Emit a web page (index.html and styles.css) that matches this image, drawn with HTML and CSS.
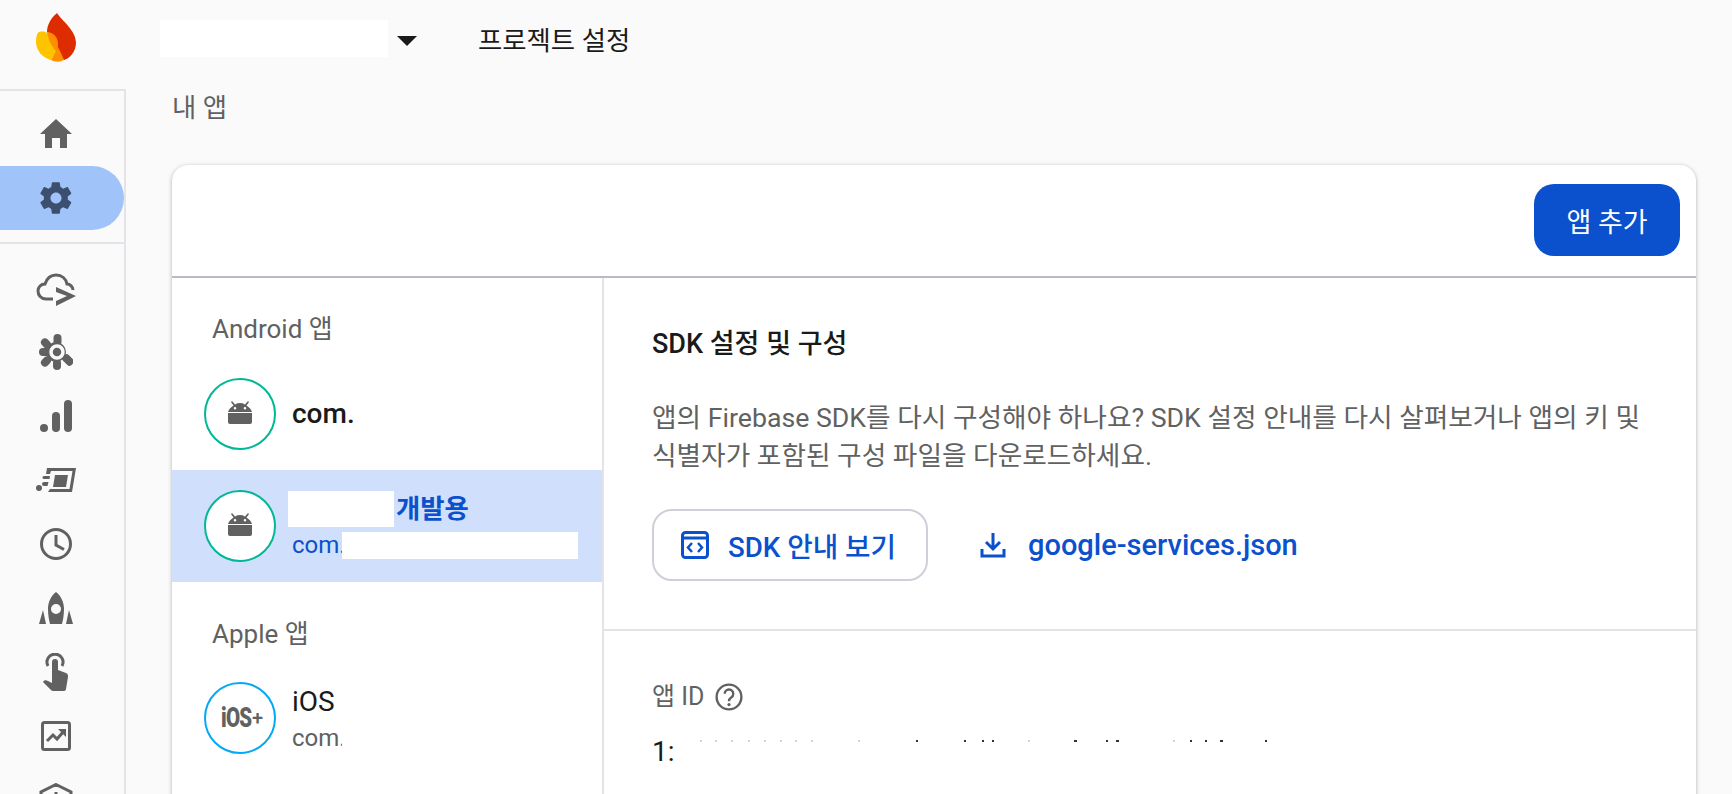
FILE: index.html
```html
<!DOCTYPE html>
<html lang="ko">

<head>
    <meta charset="UTF-8">
    <title>프로젝트 설정</title>
    <link rel="stylesheet" href="styles.css">
</head>

<body>
    <div class="page">
        <div class="logo">
            <svg width="41" height="50" viewBox="0 0 41 50">
                <path d="M15 47 C17 44 19 38 20 30 L29 46 C24 50 19 49 15 47Z" fill="#ff8f00"/>
                <path d="M21 0 C26 8 40 17 40 30 C40 39 33 46 28 47 C25 40 22 32 11 19 C11 12 15 5 21 0Z" fill="#dd2c00"/>
                <path d="M3 19 C7 18 10 19 11 20 C14 28 17 33 20 38 L15 47 C7 45 0 38 0 29 C0 24 1 20 3 19Z" fill="#ffc400"/>
                <path d="M11 19 C17 19 22 24 22 31 C22 34 21 36 19.5 38 C16 33 12 27 11 19Z" fill="#ff8f00"/>
            </svg>
        </div>
        <aside class="sidebar">
            <div class="nav-item">
                <svg width="34" height="30" viewBox="0 0 34 30"><path d="M17 0 L33 15 H28 V29 H21 V19 H13 V29 H6 V15 H1Z" fill="#616161"/></svg>
            </div>
            <div class="nav-item active">
                <svg width="38" height="38" viewBox="0 0 24 24"><path d="M19.4 13c.1-.3.1-.6.1-1s0-.7-.1-1l2.100-1.600c.2-.2.2-.4.1-.6l-2-3.500c-.1-.2-.4-.3-.6-.2l-2.500 1c-.5-.4-1.100-.7-1.700-1L14.400 2.400c0-.2-.2-.4-.5-.4h-4c-.3 0-.5.2-.5.4L9 5.100c-.6.3-1.200.6-1.700 1l-2.500-1c-.2-.1-.5 0-.6.2l-2 3.500c-.1.2-.1.4.1.6L4.400 11c0 .3-.1.7-.1 1s0 .7.1 1l-2.100 1.600c-.2.2-.2.4-.1.6l2 3.500c.1.2.4.3.6.2l2.500-1c.5.4 1.100.7 1.700 1l.4 2.700c0 .2.2.4.5.4h4c.3 0 .5-.2.5-.4l.4-2.700c.6-.3 1.200-.6 1.700-1l2.500 1c.2.1.5 0 .6-.2l2-3.500c.1-.2.1-.4-.1-.6L19.400 13zM12 15.500c-1.900 0-3.500-1.600-3.500-3.500s1.600-3.500 3.500-3.500 3.500 1.600 3.500 3.500-1.600 3.500-3.500 3.500z" fill="#3c4f6e"/></svg>
            </div>
            <div class="nav-rule"></div>
            <div class="nav-item cloud">
                <svg width="40" height="34" viewBox="0 0 40 34"><path d="M17 26 H10 C5 26 2 22 2 18 C2 14 5 11 9 11 C11 5 15 2 20 2 C26 2 30 6 31 11 C34 11 37 14 37 17" fill="none" stroke="#616161" stroke-width="3"/><path d="M20 14 L40 23 L20 33 V28 L31 23 L20 19Z" fill="#616161"/></svg>
            </div>
            <div class="nav-item">
                <svg width="34" height="36" viewBox="0 0 34 36">
                    <g fill="#616161">
                        <rect x="14.5" y="0" width="8" height="12" rx="4"/>
                        <rect x="0" y="14" width="12" height="8" rx="4"/>
                        <rect x="14" y="25" width="8" height="11" rx="4"/>
                        <rect x="3" y="4" width="8" height="11" rx="4" transform="rotate(-45 7 9.5)"/>
                        <rect x="3" y="22" width="8" height="11" rx="4" transform="rotate(45 7 27.5)"/>
                        <rect x="25" y="20" width="8" height="12" rx="3" transform="rotate(-45 29 26)"/>
                        <circle cx="17" cy="18" r="10"/>
                    </g>
                    <circle cx="18" cy="18" r="6" fill="none" stroke="#fafafa" stroke-width="3.5"/>
                </svg>
            </div>
            <div class="nav-item">
                <svg width="32" height="32" viewBox="0 0 32 32"><g fill="#616161"><circle cx="4" cy="28" r="4"/><rect x="12" y="12" width="8" height="20" rx="4"/><rect x="24" y="0" width="8" height="32" rx="4"/></g></svg>
            </div>
            <div class="nav-item">
                <svg width="40" height="24" viewBox="0 0 40 24"><g fill="#616161"><circle cx="3" cy="20" r="3"/><path d="M8 8 H14 L13.5 11 H8 A1.5 1.5 0 0 1 8 8Z"/><path d="M8 14 H12.5 L11.5 18 H8 A2 2 0 0 1 8 14Z"/><path d="M11 0 H40 L36 24 H12 L14 21 H33.5 L36.5 3 H15 L14 6 H10Z"/><path d="M19 7 H32 L30 19 H17Z"/></g></svg>
            </div>
            <div class="nav-item">
                <svg width="32" height="32" viewBox="0 0 32 32"><circle cx="16" cy="16" r="14.5" fill="none" stroke="#616161" stroke-width="3"/><path d="M16 7 V17 L24 21.5" fill="none" stroke="#616161" stroke-width="3"/></svg>
            </div>
            <div class="nav-item">
                <svg width="34" height="32" viewBox="0 0 34 32"><path d="M17 0 C22 4 25 10 25 17 C25 23 24 28 23 32 H11 C10 28 9 23 9 17 C9 10 12 4 17 0Z M17 12 A5 5 0 1 0 17 22 A5 5 0 1 0 17 12Z" fill="#616161" fill-rule="evenodd"/><path d="M4 18 L7 32 H0Z M30 18 L34 32 H27Z" fill="#616161"/></svg>
            </div>
            <div class="nav-item">
                <svg width="26" height="38" viewBox="0 0 26 38"><path d="M5 13 A8 8 0 1 1 19 13" fill="none" stroke="#616161" stroke-width="3"/><path d="M9 9 A3 3 0 0 1 15 9 V17 L23 20 C25 21 25 22 25 24 L23 36 C23 37 22 38 21 38 H10 C9 38 8 37 7 36 L0 29 C1 27 3 27 5 28 L9 30Z" fill="#616161"/></svg>
            </div>
            <div class="nav-item">
                <svg width="30" height="30" viewBox="0 0 30 30"><rect x="1.5" y="1.5" width="27" height="27" rx="2" fill="none" stroke="#616161" stroke-width="3"/><path d="M6 20 L12 14 L16 18 L23 10" fill="none" stroke="#616161" stroke-width="3"/><path d="M17 8 H25 V16Z" fill="#616161"/></svg>
            </div>
            <div class="nav-item">
                <svg width="34" height="34" viewBox="0 0 34 34"><path d="M17 1.5 L32 9 V24 L17 32 L2 24 V9Z M17 9 V30" fill="none" stroke="#616161" stroke-width="3"/></svg>
            </div>
        </aside>

        <div class="main">
            <header class="topbar">
                <div class="project-mask"></div>
                <div class="caret"></div>
                <h1 class="page-title">프로젝트 설정</h1>
            </header>
            <div class="my-apps">내 앱</div>

            <section class="card">
                <div class="card-top">
                    <button class="add-app">앱 추가</button>
                </div>
                <div class="card-body">
                    <div class="app-list">
                        <div class="group-label android-label">Android 앱</div>
                        <div class="app-row">
                            <div class="app-icon android">
                                <svg width="24" height="24" viewBox="0 0 24 24"><path d="M4 1 L7 4.5 A10 10 0 0 1 17 4.5 L20 1 L21 2 L18.5 5.5 C20.5 7 23 8.5 24 12 H0 C1 8.5 3.5 7 5.5 5.5 L3 2Z M7 7 A1.3 1.3 0 1 0 7 9.6 A1.3 1.3 0 1 0 7 7Z M17 7 A1.3 1.3 0 1 0 17 9.6 A1.3 1.3 0 1 0 17 7Z" fill="#616161" fill-rule="evenodd"/><path d="M0 13 H24 V22 A2 2 0 0 1 22 24 H2 A2 2 0 0 1 0 22Z" fill="#616161"/></svg>
                            </div>
                            <div class="app-text">
                                <div class="app-name">com.</div>
                            </div>
                        </div>
                        <div class="app-row selected">
                            <div class="app-icon android">
                                <svg width="24" height="24" viewBox="0 0 24 24"><path d="M4 1 L7 4.5 A10 10 0 0 1 17 4.5 L20 1 L21 2 L18.5 5.5 C20.5 7 23 8.5 24 12 H0 C1 8.5 3.5 7 5.5 5.5 L3 2Z M7 7 A1.3 1.3 0 1 0 7 9.6 A1.3 1.3 0 1 0 7 7Z M17 7 A1.3 1.3 0 1 0 17 9.6 A1.3 1.3 0 1 0 17 7Z" fill="#616161" fill-rule="evenodd"/><path d="M0 13 H24 V22 A2 2 0 0 1 22 24 H2 A2 2 0 0 1 0 22Z" fill="#616161"/></svg>
                            </div>
                            <div class="app-text">
                                <div class="app-name"><span class="mask name-mask"></span>개발용</div>
                                <div class="app-pkg">com.<span class="mask pkg-mask"></span></div>
                            </div>
                        </div>
                        <div class="group-label">Apple 앱</div>
                        <div class="app-row">
                            <div class="app-icon ios"><span>iOS</span><small>+</small></div>
                            <div class="app-text ios-text">
                                <div class="app-name">iOS</div>
                                <div class="app-pkg">com.<span class="mask dot-mask"></span></div>
                            </div>
                        </div>
                    </div>

                    <div class="detail">
                        <div class="sdk-block">
                            <h2 class="sdk-title">SDK 설정 및 구성</h2>
                            <p class="sdk-desc">앱의 Firebase SDK를 다시 구성해야 하나요? SDK 설정 안내를 다시 살펴보거나 앱의 키 및 식별자가 포함된 구성 파일을 다운로드하세요.</p>
                            <div class="sdk-actions">
                                <a class="btn-outline" href="#">
                                    <svg width="28" height="28" viewBox="0 0 28 28"><rect x="1.5" y="1.5" width="25" height="25" rx="3" fill="none" stroke="#0b50cc" stroke-width="3"/><path d="M2 7 H26" stroke="#0b50cc" stroke-width="3"/><path d="M11 12 L7 16.5 L11 21 M17 12 L21 16.5 L17 21" fill="none" stroke="#0b50cc" stroke-width="2.5"/></svg>
                                    SDK 안내 보기
                                </a>
                                <a class="btn-link" href="#">
                                    <svg width="26" height="26" viewBox="0 0 26 26"><path d="M13 1 V16 M6 10 L13 17 L20 10" fill="none" stroke="#0b50cc" stroke-width="3"/><path d="M2 17 V24 H24 V17" fill="none" stroke="#0b50cc" stroke-width="3"/></svg>
                                    google-services.json
                                </a>
                            </div>
                        </div>
                        <div class="id-block">
                            <div class="id-label">앱 ID
                                <svg width="28" height="28" viewBox="0 0 26 26"><circle cx="13" cy="13" r="11.5" fill="none" stroke="#616161" stroke-width="2.2"/><path d="M9 10 A4 4 0 1 1 15 13.5 C13.5 14.5 13 15 13 17" fill="none" stroke="#616161" stroke-width="2.2"/><circle cx="13" cy="20" r="1.5" fill="#616161"/></svg>
                            </div>
                            <div class="id-value">
                                <span>1:</span>
                                <!-- what is left of the hidden id above the white bar -->
                                <svg class="id-rest" width="600" height="3" viewBox="0 0 600 3">
                                    <path d="M17 1h2M32 1h2M48 1h2M65 1h2M81 1h2M97 1h2M112 1h2M128 1h2M175 1h2M345 1h2M490 1h2" stroke="#c4c4c4" stroke-width="1.5"/>
                                    <path d="M233 1h2M281 1h2M299 1h2M309 1h2M391 1h3M423 1h2M433 1h3M507 1h2M522 1h2M537 1h3M582 1h2" stroke="#333" stroke-width="2"/>
                                </svg>
                            </div>
                        </div>
                    </div>
                </div>
            </section>
        </div>
    </div>
</body>

</html>
```

FILE: styles.css
```css
* {
    box-sizing: border-box;
}

html,
body {
    margin: 0;
    height: 794px;
    overflow: hidden;
}

body {
    background-color: #fafafa;
    font-family: Roboto, "Noto Sans CJK KR", sans-serif;
    color: #1a1a1a;
}

.page {
    display: grid;
    grid-template-columns: 126px 1fr;
    grid-template-rows: 89px 705px;
    height: 794px;
    overflow: hidden;
}

.logo {
    padding: 13px 0 0 36px;
}

.sidebar {
    grid-column: 1;
    grid-row: 2;
    border-top: 2px solid #e3e3e8;
    border-right: 2px solid #e3e3e8;
    padding-top: 11px;
    overflow: hidden;
}

.nav-item {
    display: flex;
    align-items: center;
    justify-content: center;
    height: 64px;
    width: 112px;
}

.nav-item.active {
    width: 124px;
    padding-right: 12px;
    background-color: #a0c3fa;
    border-radius: 0 32px 32px 0;
}

.nav-item.cloud {
    padding-top: 4px;
}

.nav-rule {
    height: 2px;
    background-color: #e3e3e8;
    margin: 12px 0;
}

.main {
    grid-column: 2;
    grid-row: 1 / 3;
    padding-left: 46px;
    padding-right: 36px;
    height: 794px;
    overflow: hidden;
}

.topbar {
    display: flex;
    align-items: center;
    margin-left: -12px;
    padding-top: 20px;
    height: 57px;
}

.project-mask {
    width: 228px;
    height: 37px;
    background-color: #fff;
}

.caret {
    width: 0;
    height: 0;
    margin-left: 9px;
    margin-top: 4px;
    border-left: 10px solid transparent;
    border-right: 10px solid transparent;
    border-top: 10px solid #1a1a1a;
}

.page-title {
    margin: 0 0 0 61px;
    font-size: 26.4px;
    font-weight: 400;
}

.my-apps {
    margin-top: 33px;
    font-size: 26.4px;
    color: #616161;
    line-height: 36px;
}

.card {
    margin-top: 39px;
    height: 640px;
    background-color: #fff;
    border-radius: 16px 16px 0 0;
    box-shadow: 0 1px 4px rgba(0, 0, 0, .3);
}

.card-top {
    display: flex;
    justify-content: flex-end;
    align-items: flex-start;
    height: 113px;
    padding: 19px 16px 0 0;
    border-bottom: 2px solid #b8bac6;
}

.add-app {
    width: 146px;
    height: 72px;
    border: 0;
    border-radius: 20px;
    background-color: #0b50cc;
    color: #fff;
    font-family: inherit;
    font-size: 27px;
}

.card-body {
    display: flex;
}

.app-list {
    width: 432px;
    border-right: 2px solid #e3e3e8;
    height: 600px;
}

.group-label {
    height: 80px;
    padding-top: 34px;
    padding-left: 40px;
    font-size: 26px;
    line-height: 36px;
    color: #616161;
}

.android-label {
    padding-top: 33px;
}

.app-row {
    display: flex;
    align-items: center;
    height: 112px;
    padding-left: 32px;
}

.app-row.selected {
    background-color: #cfdffc;
    color: #0b50cc;
}

.app-icon {
    display: flex;
    align-items: center;
    justify-content: center;
    flex: none;
    width: 72px;
    height: 72px;
    border-radius: 50%;
    background-color: #fff;
}

.app-icon.android {
    border: 2px solid #00b894;
    padding-bottom: 5px;
}

.app-icon.ios {
    border: 2px solid #03a9f4;
    color: #616161;
    font-weight: 900;
    font-size: 27px;
    letter-spacing: -1px;
    padding-left: 3px;
}

.app-icon.ios span {
    display: inline-block;
    width: 31px;
    transform: scaleX(.76);
    transform-origin: left center;
}

.app-icon.ios small {
    font-size: 20px;
    font-weight: 500;
}

.app-text {
    margin-left: 12px;
}

.ios-text {
    padding-top: 4px;
}

.ios-text .app-name {
    font-weight: 400;
}

.app-name {
    font-size: 28px;
    font-weight: 500;
    line-height: 36px;
    margin-left: 4px;
}

.selected .app-name {
    margin-left: 0;
    margin-top: 2px;
    display: flex;
    align-items: center;
    font-size: 26.4px;
    font-weight: 700;
}

.app-pkg {
    font-size: 24px;
    line-height: 36px;
    margin-left: 4px;
    color: #616161;
    display: flex;
    align-items: center;
}

.selected .app-pkg {
    color: #0b50cc;
}

.mask {
    display: inline-block;
    background-color: #fff;
}

.name-mask {
    width: 106px;
    height: 36px;
    margin-right: 2px;
}

.pkg-mask {
    width: 236px;
    height: 27px;
    margin-left: -4px;
}

.dot-mask {
    width: 6px;
    height: 27px;
    margin-left: -4px;
}

.detail {
    flex: 1;
}

.sdk-block {
    height: 353px;
    padding: 48px 48px 0 48px;
    border-bottom: 2px solid #e3e3e8;
}

.sdk-title {
    margin: 0;
    font-size: 27px;
    font-weight: 500;
    line-height: 36px;
}

.sdk-desc {
    margin: 37px 0 0;
    font-size: 26.7px;
    line-height: 38px;
    color: #616161;
}

.sdk-actions {
    display: flex;
    align-items: center;
    margin-top: 34px;
}

.btn-outline,
.btn-link {
    display: flex;
    align-items: center;
    color: #0b50cc;
    text-decoration: none;
    font-weight: 500;
}

.btn-outline {
    width: 276px;
    height: 72px;
    padding-left: 27px;
    gap: 19px;
    border: 2px solid #cdd0d8;
    border-radius: 20px;
    font-size: 27.7px;
}

.btn-link {
    margin-left: 52px;
    gap: 22px;
    font-size: 29px;
}

.id-block {
    padding: 48px 48px 0;
}

.id-label {
    display: flex;
    align-items: center;
    gap: 11px;
    font-size: 25px;
    line-height: 36px;
    color: #616161;
}

.id-value {
    display: flex;
    margin-top: 19px;
    font-size: 28px;
    line-height: 36px;
}

.id-rest {
    flex: none;
    margin-left: 8px;
    margin-top: 6px;
}
```
